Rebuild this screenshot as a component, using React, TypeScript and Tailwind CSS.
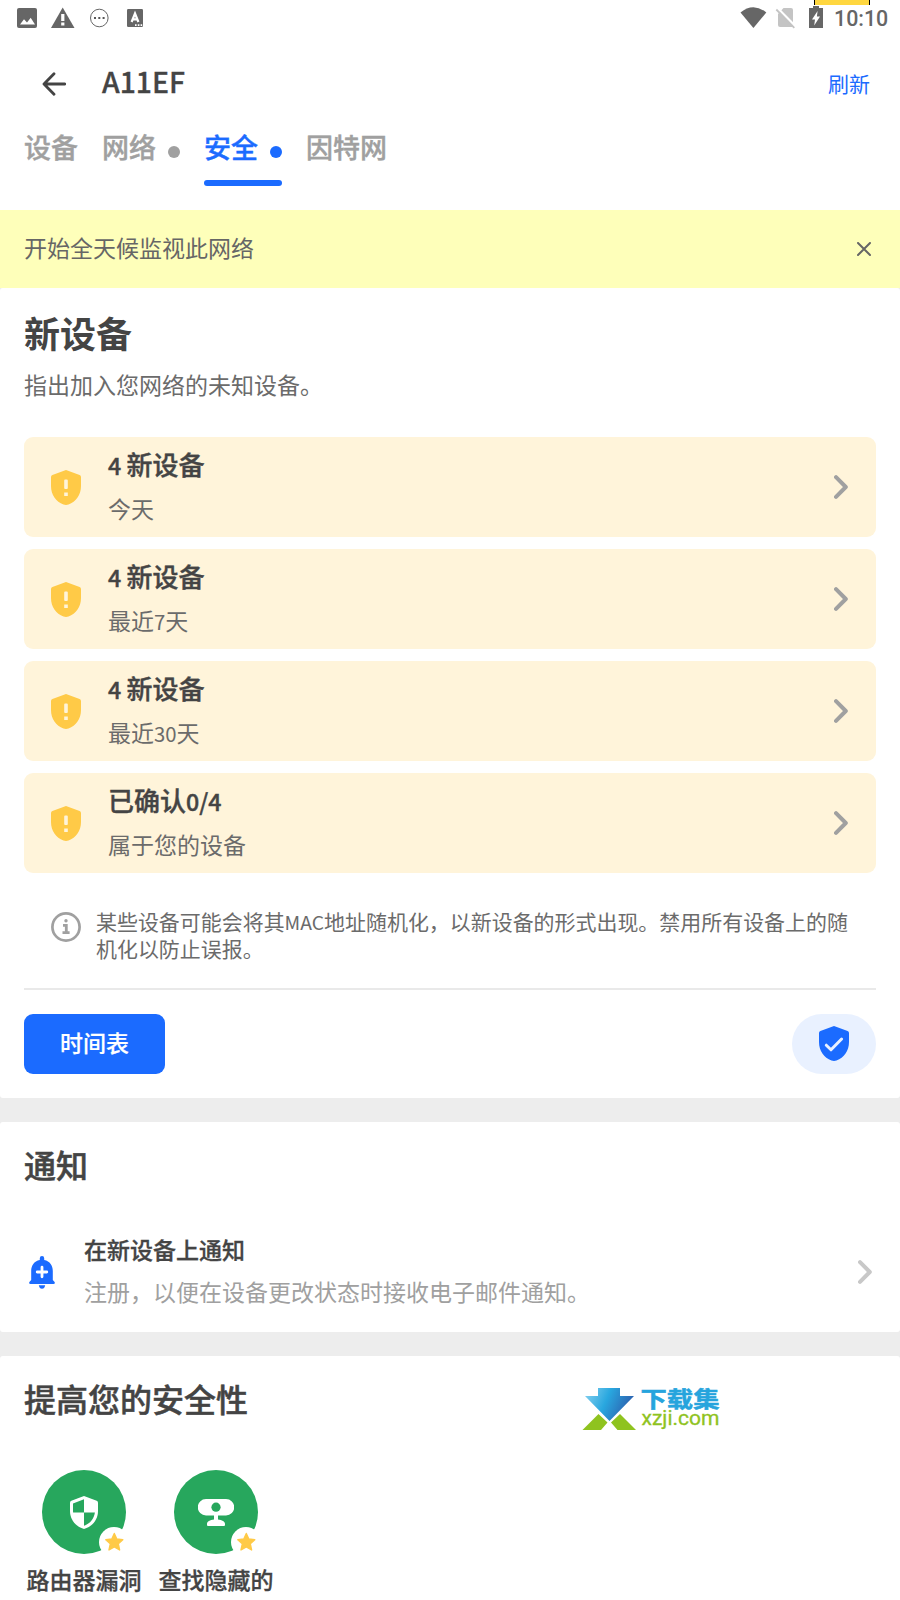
import type { ReactNode } from 'react';

const SHIELD = 'M15 0 L28.6 5 Q30 5.6 30 7 V16 C30 24.5 25 32 17.5 34.5 Q15 35.4 12.5 34.5 C5 32 0 24.5 0 16 V7 Q0 5.6 1.4 5 Z';

function StatusBar() {
  return (
    <div className="relative flex h-9 shrink-0 items-start justify-between text-[#666]">
      <svg className="h-9 w-[160px]" viewBox="0 0 160 36">
        <rect x="17" y="8" width="20" height="20" rx="2" fill="#666" />
        <path d="M20 24.5 L24 19.3 L27 22.6 L30.7 17.8 L35 24.5 Z" fill="#fff" />
        <path d="M62.7 7.5 L74.5 28 H51 Z" fill="#666" />
        <path d="M61.2 14 h3.2 v7 h-3.2 z M61.2 22.5 h3.2 v3 h-3.2 z" fill="#fff" />
        <circle cx="99.3" cy="18" r="8.8" fill="none" stroke="#666" strokeWidth="1" />
        <path d="M94 17 h2 v2 h-2z M98.3 17 h2 v2 h-2z M102.6 17 h2 v2 h-2z" fill="#555" />
        <rect x="127" y="9" width="16" height="18" rx="1.2" fill="#666" />
        <path d="M131.6 22 L135 13.5 L138.4 22 M133.2 19.4 H136.8" fill="none" stroke="#fff" strokeWidth="2.2" />
        <path d="M135 24.3 h1.6 v1.6 h-1.6z M137.8 24.3 h1.6 v1.6 h-1.6z M140.6 24.3 h1.6 v1.6 h-1.6z" fill="#fff" />
      </svg>
      <div className="flex">
        <svg className="h-9 w-[95px]" viewBox="735 0 95 36">
          <path d="M740.5 12.5 Q753.3 1.8 766.3 12.5 L753.4 28 Z" fill="#666" />
          <path d="M783.5 8 H791 Q793 8 793 10 V27 H780 Q778 27 778 25 V14 Z" fill="#c4c4c4" />
          <path d="M777.5 8 L795.5 26.3" stroke="#fff" strokeWidth="2.4" />
          <path d="M776.3 9.5 L794.3 27.8" stroke="#c4c4c4" strokeWidth="1.8" />
          <path d="M813 6 H819 V8 H823 V28 H809 V8 H813 Z" fill="#666" />
          <path d="M817.6 11 L812 19.5 H815 L814.2 25.5 L820 16.6 H816.9 Z" fill="#fff" />
        </svg>
        <span className="mr-3 w-[58px] pl-[4px] font-[Roboto,sans-serif] text-[21.4px] leading-[37px] font-medium whitespace-nowrap">10:10</span>
      </div>
      <div className="absolute top-0 left-[814px] h-[5px] w-14 border-x border-dashed border-black bg-[#ffd740]" />
    </div>
  );
}

function Tab({ label, dot, active, wide }: { label: string; dot?: boolean; active?: boolean; wide?: boolean }) {
  return (
    <div className={active ? 'flex flex-col text-[#1b6bff]' : 'flex flex-col text-[#a0a0a0]'}>
      <div className="flex h-9 items-center">
        <span className={wide ? 'mb-[3px] w-[81px] whitespace-nowrap [-webkit-text-stroke:0.4px_currentColor]' : 'mb-[3px] w-[54px] whitespace-nowrap [-webkit-text-stroke:0.4px_currentColor]'}>{label}</span>
        {dot && <i className="mt-[7px] ml-3 size-3 rounded-full bg-current" />}
      </div>
      {active && <div className="mt-[14px] h-[6px] rounded-full bg-[#1b6bff]" />}
    </div>
  );
}

function Chevron({ color }: { color: string }) {
  return (
    <svg className="h-6 w-[14px] shrink-0" viewBox="0 0 14 24" fill="none" stroke={color} strokeWidth="4" strokeLinecap="round" strokeLinejoin="round">
      <path d="M2 2.2 L11.8 12 L2 21.8" />
    </svg>
  );
}

function DeviceCard({ title, sub }: { title: ReactNode; sub: ReactNode }) {
  return (
    <div className="flex h-[100px] items-center rounded-[9px] bg-[#fff4da] pr-7 pl-[27px]">
      <svg className="h-[35px] w-[30px] shrink-0" viewBox="0 0 30 35">
        <path d={SHIELD} fill="#ffca47" />
        <path d="M13.2 10.4 q0-.9 .9-.9 h1.8 q.9 0 .9 .9 v7.7 q0 .9-.9 .9 h-1.8 q-.9 0-.9-.9z M13.2 22.5 h3.6 v3.4 h-3.6z" fill="#fff4da" />
      </svg>
      <div className="ml-[27px] flex h-full flex-1 flex-col pt-[9px]">
        <div className="h-9 text-[26px] leading-9 font-medium text-[#444] [-webkit-text-stroke:0.4px_currentColor]">{title}</div>
        <div className="mt-[9px] h-[34px] text-[23px] leading-[34px] text-[#6b6b6b]">{sub}</div>
      </div>
      <Chevron color="#a0a0a0" />
    </div>
  );
}

function Feature({ label, children }: { label: string; children: ReactNode }) {
  return (
    <div className="flex w-[132px] flex-col items-center">
      <div className="relative flex size-[84px] items-center justify-center rounded-full bg-[#27a75d]">
        {children}
        <div className="absolute top-[57px] left-[57px] flex size-[30px] items-center justify-center rounded-full bg-white">
          <svg className="size-5" viewBox="0 0 20 20">
            <path d="M10.3 1.5 L12.8 7 L18.8 7.7 L14.3 11.8 L15.6 18 L10.3 15 L5 18 L6.3 11.8 L1.8 7.7 L7.8 7 Z" fill="#ffca47" stroke="#ffca47" strokeWidth="1.4" strokeLinejoin="round" />
          </svg>
        </div>
      </div>
      <div className="mt-2 text-[23px] leading-[34px] font-medium whitespace-nowrap text-[#444] [-webkit-text-stroke:0.3px_currentColor]">{label}</div>
    </div>
  );
}

function SiteLogo() {
  return (
    <svg className="absolute top-[19px] left-[580px] h-[70px] w-[145px] overflow-visible" viewBox="580 1375 145 70">
      <defs>
        <linearGradient id="arrow" x1="0" x2="1" y1="0" y2="0.3">
          <stop offset="0" stopColor="#8bd3f0" />
          <stop offset="0.5" stopColor="#29a7df" />
          <stop offset="1" stopColor="#2c62b0" />
        </linearGradient>
      </defs>
      <path d="M598 1388 H620 V1396 H634 L609.5 1421 L585 1396 H598 Z" fill="url(#arrow)" />
      <path d="M598.5 1414 L607.5 1422.5 L601 1430 H582.5 Z M620 1414 L636 1430 H617.5 L611 1422.5 Z" fill="#8fc31f" />
      <text x="640.5" y="1407" textLength="79" lengthAdjust="spacingAndGlyphs" className="font-['Noto_Sans_CJK_SC',sans-serif] text-[22px] font-bold" fill="#26a4dd" stroke="#26a4dd" strokeWidth="0.5">下载集</text>
      <text x="641.5" y="1425.3" textLength="78" lengthAdjust="spacingAndGlyphs" className="font-[Roboto,sans-serif] text-[20px]" fill="#8fc31f" stroke="#8fc31f" strokeWidth="0.3">xzji.com</text>
    </svg>
  );
}

export default function App() {
  return (
    <div className="flex h-[1600px] w-[900px] flex-col overflow-hidden bg-[#ededed] font-['Noto_Sans_CJK_SC',sans-serif]">
      <div className="flex h-[210px] shrink-0 flex-col bg-white">
        <StatusBar />
        <header className="flex h-24 shrink-0 items-center pr-[30px] pl-[42px]">
          <svg className="size-6" viewBox="0 0 24 24" fill="none" stroke="#444" strokeWidth="2.8" strokeLinecap="round" strokeLinejoin="round">
            <path d="M22.7 12 H2.3 M12 1.7 L2 12 L12 22.3" />
          </svg>
          <h1 className="mb-[6px] ml-9 flex-1 text-[28.4px] leading-10 font-medium text-[#444] [-webkit-text-stroke:0.3px_currentColor]">A11EF</h1>
          <span className="mb-[2px] text-[21px] leading-8 text-[#1b6bff]">刷新</span>
        </header>
        <nav className="-mt-[3px] flex gap-6 pt-px pl-[24px] text-[27px] leading-[35px] font-medium">
          <Tab label="设备" />
          <Tab label="网络" dot />
          <Tab label="安全" dot active />
          <Tab label="因特网" wide />
        </nav>
      </div>

      <div className="flex h-[78px] shrink-0 items-center justify-between bg-[#feffba] pr-[29px] pl-6">
        <span className="mb-1 text-[23px] leading-[34px] text-[#666]">开始全天候监视此网络</span>
        <svg className="size-[14px]" viewBox="0 0 14 14" stroke="#666" strokeWidth="2" strokeLinecap="round">
          <path d="M1 1 L13 13 M13 1 L1 13" />
        </svg>
      </div>

      <section className="h-[810px] shrink-0 rounded-[3px] bg-white px-6 pt-5">
        <h2 className="text-[36px] leading-[48px] font-bold text-[#444]">新设备</h2>
        <p className="mt-[11px] text-[23px] leading-[34px] text-[#6b6b6b]">指出加入您网络的未知设备。</p>
        <div className="mt-9 flex flex-col gap-3">
          <DeviceCard title={<><span className="text-[23.2px]">4 </span>新设备</>} sub="今天" />
          <DeviceCard title={<><span className="text-[23.2px]">4 </span>新设备</>} sub={<>最近<span className="text-[20.3px]">7</span>天</>} />
          <DeviceCard title={<><span className="text-[23.2px]">4 </span>新设备</>} sub={<>最近<span className="text-[20.3px]">30</span>天</>} />
          <DeviceCard title={<>已确认<span className="text-[23.2px]">0/4</span></>} sub="属于您的设备" />
        </div>
        <div className="mt-[35px] flex h-20 pl-[27px]">
          <svg className="mt-1 size-[30px] shrink-0" viewBox="0 0 30 30">
            <circle cx="15" cy="15" r="13.6" fill="none" stroke="#a0a0a0" strokeWidth="2.7" />
            <circle cx="15" cy="8.8" r="1.7" fill="#a0a0a0" />
            <path d="M12 13.4 H15.3 V20.7 M11.5 20.7 H18.6" fill="none" stroke="#a0a0a0" strokeWidth="2.8" />
          </svg>
          <p className="ml-[15px] text-[20.96px] leading-[26.6px] whitespace-nowrap text-[#6b6b6b]">
            某些设备可能会将其<span className="text-[19.3px] leading-none">MAC</span>地址随机化，以新设备的形式出现。禁用所有设备上的随<br />机化以防止误报。
          </p>
        </div>
        <div className="h-[2px] bg-[#e9e9e9]" />
        <div className="mt-6 flex h-[60px] justify-between">
          <button className="w-[141px] rounded-[9px] bg-[#1b6bff] pb-1 text-[23px] leading-[34px] font-medium text-white [-webkit-text-stroke:0.2px_currentColor]">时间表</button>
          <div className="flex w-[84px] items-center justify-center rounded-full bg-[#e9f1ff]">
            <svg className="mb-px h-[35px] w-[30px]" viewBox="0 0 30 35">
              <path d={SHIELD} fill="#1b6bff" />
              <path d="M7.3 19.2 L12 23.8 L22.6 13" fill="none" stroke="#e9f1ff" strokeWidth="3" strokeLinecap="round" strokeLinejoin="round" />
            </svg>
          </div>
        </div>
      </section>

      <section className="mt-6 h-[210px] shrink-0 rounded-[3px] bg-white px-6 pt-5">
        <h2 className="text-[32px] leading-[44px] font-medium text-[#444] [-webkit-text-stroke:0.5px_currentColor]">通知</h2>
        <div className="mt-[46px] flex h-[78px] items-center pr-1 pl-[5px]">
          <svg className="mt-[2px] h-[33px] w-[26px] shrink-0" viewBox="0 0 26 33">
            <path d="M10.8 4 V2.2 Q10.8 0 13 0 T15.2 2.2 V4 C21 5.2 23.8 9.5 23.8 15 V24 L25.6 26 Q26.4 28 24.5 28 H1.5 Q-.4 28 .4 26 L2.2 24 V15 C2.2 9.5 5 5.2 10.8 4 Z M9.8 29.3 H16.2 Q15.5 32.8 13 32.8 T9.8 29.3Z" fill="#1b6bff" />
            <path d="M13 11.2 V20.8 M8.2 16 H17.8" stroke="#fff" strokeWidth="2.8" strokeLinecap="round" />
          </svg>
          <div className="ml-[29px] flex h-full flex-1 flex-col">
            <div className="text-[23px] leading-[34px] font-medium text-[#444] [-webkit-text-stroke:0.3px_currentColor]">在新设备上通知</div>
            <div className="mt-[8px] text-[23px] leading-[34px] text-[#a0a0a0]">注册，以便在设备更改状态时接收电子邮件通知。</div>
          </div>
          <div className="mt-[2px]"><Chevron color="#c8c8c8" /></div>
        </div>
      </section>

      <section className="relative mt-6 h-[244px] shrink-0 rounded-t-[3px] bg-white pt-5">
        <h2 className="pl-6 text-[32px] leading-[44px] font-medium text-[#444] [-webkit-text-stroke:0.5px_currentColor]">提高您的安全性</h2>
        <div className="mt-[50px] flex pl-[18px]">
          <Feature label="路由器漏洞">
            <svg className="h-[33px] w-[28px]" viewBox="0 0 28 33">
              <path d="M14 0 L26.7 4.8 Q28 5.4 28 6.8 V15 C28 23 23 30.5 14 33 C5 30.5 0 23 0 15 V6.8 Q0 5.4 1.3 4.8 Z" fill="#fff" />
              <path d="M14 3.2 V16.5 H3.1 Q3 15.5 3 14 V7.4 Z M14 16.5 H24.9 C24 22.5 20.5 27.5 14 29.7 Z" fill="#27a75d" />
            </svg>
          </Feature>
          <Feature label="查找隐藏的">
            <svg className="mt-[2px] h-[28px] w-[36px]" viewBox="0 0 36 28">
              <path d="M8 0 H28 A8.2 8.2 0 0 1 28 16.5 H20 V20.5 C24 21 27 22.5 27 25 V26 Q27 27 26 27 H10 Q9 27 9 26 V25 C9 22.5 12 21 16 20.5 V16.5 H8 A8.2 8.2 0 0 1 8 0 Z" fill="#fff" />
              <circle cx="18" cy="8.2" r="4.6" fill="#27a75d" />
            </svg>
          </Feature>
        </div>
        <SiteLogo />
      </section>
    </div>
  );
}
